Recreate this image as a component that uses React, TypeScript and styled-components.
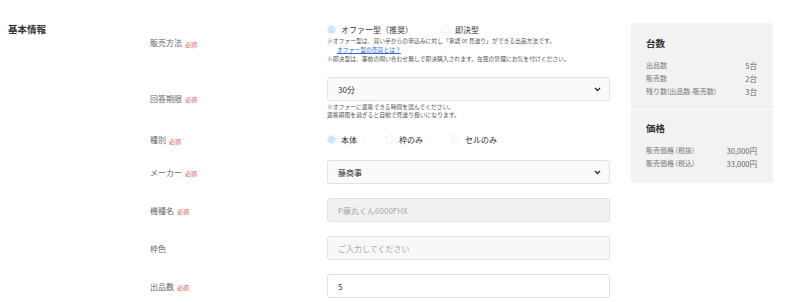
import styled, { createGlobalStyle } from "styled-components";

const GlobalStyle = createGlobalStyle`
  body {
    margin: 0;
    background: #ffffff;
    font-family: "Noto Sans CJK JP", "Noto Sans", sans-serif;
    color: #333;
  }
`

const summary = [
  {
    title: "台数",
    rows: [
      ["出品数", "5台"],
      ["販売数", "2台"],
      ["残り数(出品数-販売数)", "3台"],
    ],
  },
  {
    title: "価格",
    rows: [
      ["販売価格 (税抜)", "30,000円"],
      ["販売価格 (税込)", "33,000円"],
    ],
  },
]

const Chevron = () => (
  <svg width="7" height="5" viewBox="0 0 7 5">
    <polyline points="1,1 3.5,3.6 6,1" fill="none" stroke="#333" strokeWidth="1.4" />
  </svg>
)

const Label = ({ text, required }: { text: string; required?: boolean }) => (
  <LabelCell>
    <span>{text}</span>
    {required && <Required>必須</Required>}
  </LabelCell>
)

const App = () => {
  return (
    <Page>
      <GlobalStyle />
      <Title>基本情報</Title>
      <Form>
        <Row>
          <Label text="販売方法" required />
          <Field>
            <Radios $height={14}>
              <Option>
                <Radio checked />
                オファー型（推奨）
              </Option>
              <Option>
                <Radio />
                即決型
              </Option>
            </Radios>
            <Note>※オファー型は、買い手からの申込みに対し「承認 or 見送り」ができる出品方法です。</Note>
            <Link>オファー型の売買とは？</Link>
            <Note>※即決型は、事前の問い合わせ無しで即決購入されます。在庫の管理にお気を付けください。</Note>
          </Field>
        </Row>
        <Row>
          <Label text="回答期限" required />
          <Field>
            <Select>
              30分
              <Chevron />
            </Select>
            <Notes>
              <Note $tight>※オファーに返答できる時間を選んでください。</Note>
              <Note $tight>返答期限を過ぎると自動で見送り扱いになります。</Note>
            </Notes>
          </Field>
        </Row>
        <Row>
          <Label text="種別" required />
          <Field>
            <Radios $height={13}>
              <Option>
                <Radio checked />
                本体
              </Option>
              <Option>
                <Radio />
                枠のみ
              </Option>
              <Option>
                <Radio />
                セルのみ
              </Option>
            </Radios>
          </Field>
        </Row>
        <Row>
          <Label text="メーカー" required />
          <Field>
            <Select>
              藤商事
              <Chevron />
            </Select>
          </Field>
        </Row>
        <Row>
          <Label text="機種名" required />
          <Field>
            <Input $variant="disabled">P藤丸くん6000FHX</Input>
          </Field>
        </Row>
        <Row>
          <Label text="枠色" />
          <Field>
            <Input $variant="placeholder">ご入力してください</Input>
          </Field>
        </Row>
        <Row>
          <Label text="出品数" required />
          <Field>
            <Input>5</Input>
          </Field>
        </Row>
      </Form>
      <Panel>
        {summary.map((s, i) => (
          <PanelSection key={i} $first={i === 0}>
            <PanelTitle>{s.title}</PanelTitle>
            {s.rows.map((r) => (
              <PanelRow key={r[0]}>
                <span>{r[0]}</span>
                <Value>{r[1]}</Value>
              </PanelRow>
            ))}
          </PanelSection>
        ))}
      </Panel>
    </Page>
  )
}

export default App;

const Page = styled.div`
  display: flex;
  align-items: flex-start;
  padding: 22px 0 0 8px;
`

const Title = styled.div`
  width: 142px;
  font-size: 9.5px;
  line-height: 14px;
  font-weight: 700;
  color: #333;
`

const Form = styled.div`
  width: 460px;
  display: flex;
  flex-direction: column;
  gap: 14px;
`

const Row = styled.div`
  display: flex;
  align-items: center;
`

const LabelCell = styled.div`
  width: 177px;
  font-size: 8px;
  color: #666;
  display: flex;
  align-items: center;
`

const Required = styled.span`
  font-size: 6px;
  color: #e94b4b;
  margin: 3px 0 0 3px;
`

const Field = styled.div`
  width: 283px;
  display: flex;
  flex-direction: column;
`

const Radios = styled.div<{ $height: number }>`
  display: flex;
  gap: 28px;
  height: ${(p) => p.$height}px;
  align-items: center;
`

const Option = styled.label`
  display: flex;
  align-items: center;
  gap: 5px;
  font-size: 8px;
  color: #333;
`

const Radio = styled.span<{ checked?: boolean }>`
  width: 9px;
  height: 9px;
  border-radius: 50%;
  box-sizing: border-box;
  background: ${(p) => (p.checked ? "#cfe4f6" : "#fff")};
  border: 1px solid ${(p) => (p.checked ? "#e3eef9" : "#f0f0f0")};
`

const Note = styled.div<{ $tight?: boolean }>`
  font-size: 5.8px;
  line-height: ${(p) => (p.$tight ? "8px" : "9px")};
  color: #555;
  white-space: nowrap;
`

const Notes = styled.div`
  margin-top: 2px;
`

const Link = styled.div`
  font-size: 5.8px;
  line-height: 9px;
  color: #2b6bd6;
  text-decoration: underline;
  padding-left: 10px;
`

const Select = styled.div`
  height: 24px;
  box-sizing: border-box;
  border: 1px solid #e2e2e2;
  border-radius: 3px;
  background: #fafafa;
  padding: 0 8px 0 10px;
  display: flex;
  align-items: center;
  justify-content: space-between;
  font-size: 8px;
  color: #333;
`

const Input = styled.div<{ $variant?: "disabled" | "placeholder" }>`
  height: 24px;
  box-sizing: border-box;
  border: 1px solid #e2e2e2;
  border-radius: 3px;
  padding: 0 10px;
  display: flex;
  align-items: center;
  font-size: 8px;
  background: ${(p) =>
    p.$variant === "disabled" ? "#f1f1f1" : p.$variant === "placeholder" ? "#f8f8f8" : "#fff"};
  color: ${(p) => (p.$variant ? "#a8a8a8" : "#333")};
`

const Panel = styled.div`
  margin: 1px 0 0 21px;
  width: 142px;
  background: #f2f2f2;
  border-radius: 3px;
`

const PanelSection = styled.div<{ $first?: boolean }>`
  padding: ${(p) => (p.$first ? "14px 16px 11px 15px" : "12px 16px 13px 15px")};
  border-top: ${(p) => (p.$first ? "none" : "1px solid #fff")};
`

const PanelTitle = styled.div`
  font-size: 9.5px;
  line-height: 13px;
  font-weight: 700;
  color: #333;
  margin-bottom: 9px;
`

const PanelRow = styled.div`
  display: flex;
  justify-content: space-between;
  font-size: 7px;
  line-height: 13px;
  color: #777;
`

const Value = styled.span`
  font-size: 7.5px;
  color: #666;
`
